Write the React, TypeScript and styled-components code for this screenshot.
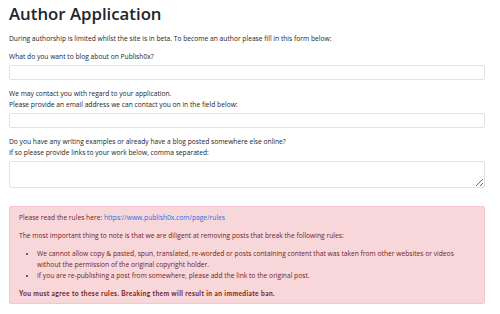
import styled, { createGlobalStyle } from "styled-components";

const GlobalStyle = createGlobalStyle`
    html, body {
        margin: 0;
        padding: 0;
        background: #fff;
    }
    body {
        font-family: "Open Sans", "Liberation Sans", sans-serif;
        color: #212529;
    }
`

export default function App() {
    return <Page>
        <GlobalStyle/>
        <Title>Author Application</Title>
        <Text>During authorship is limited whilst the site is in beta. To become an author please fill in this form below:</Text>
        <Field>
            <Label>What do you want to blog about on Publish0x?</Label>
            <Input type="text"/>
        </Field>
        <Field>
            <Label>We may contact you with regard to your application.<br/>Please provide an email address we can contact you on in the field below:</Label>
            <Input type="email"/>
        </Field>
        <Field>
            <Label>Do you have any writing examples or already have a blog posted somewhere else online?<br/>If so please provide links to your work below, comma separated:</Label>
            <TextArea/>
        </Field>
        <Alert>
            <AlertText>Please read the rules here: <AlertLink href="#">https://www.publish0x.com/page/rules</AlertLink></AlertText>
            <AlertText>The most important thing to note is that we are diligent at removing posts that break the following rules:</AlertText>
            <RuleList>
                <li>We cannot allow copy &amp; pasted, spun, translated, re-worded or posts containing content that was taken from other websites or videos without the permission of the original copyright holder.</li>
                <li>If you are re-publishing a post from somewhere, please add the link to the original post.</li>
            </RuleList>
            <AlertText><Warning>You must agree to these rules. Breaking them will result in an immediate ban.</Warning></AlertText>
        </Alert>
    </Page>
}

const Page = styled.div`
    width: 476px;
    padding: 2px 15px 0 9px;
    font-size: 6.7px;
    line-height: 11px;
`

const Title = styled.h1`
    margin: 0 0 6.5px;
    font-size: 16.8px;
    line-height: 24px;
    font-weight: 600;
    color: #212529;
`

const Text = styled.p`
    margin: 0 0 7px;
`

const Field = styled.div`
    display: flex;
    flex-direction: column;
    margin-bottom: 7.5px;
`

const Label = styled.label`
    margin-bottom: 3px;
`

const Input = styled.input`
    box-sizing: border-box;
    width: 100%;
    height: 15.5px;
    margin: 0;
    border: 1px solid #dfe3e8;
    border-radius: 2px;
    background: #fff;
    outline: none;
`

const TextArea = styled.textarea`
    box-sizing: border-box;
    width: 100%;
    height: 27px;
    margin: 0;
    border: 1px solid #dfe3e8;
    border-radius: 2px;
    background: #fff;
    outline: none;
`

const Alert = styled.div`
    margin-top: 18.5px;
    padding: 4.5px 9px;
    background: #f8d7da;
    border: 1px solid #f5c6cb;
    border-radius: 2px;
    color: #721c24;
`

const AlertText = styled.p`
    margin: 0 0 7px;

    &:last-child {
        margin-bottom: 0;
    }
`

const Warning = styled.strong`
    font-family: Lato, "Open Sans", sans-serif;
    font-weight: 700;
    letter-spacing: 0.37px;
`

const AlertLink = styled.a`
    color: #1a73e8;
    text-decoration: none;
`

const RuleList = styled.ul`
    margin: 0 0 7px;
    padding-left: 18px;
`
